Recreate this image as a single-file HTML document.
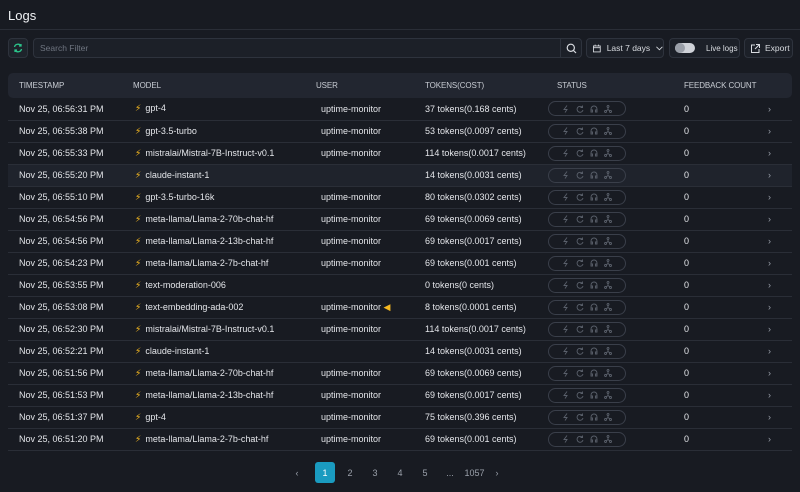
<!DOCTYPE html>
<html><head><style>
*{box-sizing:border-box;margin:0;padding:0}
body{width:800px;height:492px;background:#181b22;font-family:"Liberation Sans",sans-serif;color:#e4e6ea;position:relative;overflow:hidden;font-size:9px}
.title{position:absolute;left:8px;top:8px;font-size:13px;color:#f0f2f5}
.hr{position:absolute;left:0;right:0;top:29px;height:1px;background:#2a2e37}
.box{position:absolute;top:38px;height:20px;border:1px solid #2e333d;border-radius:4px;background:#1c2028;display:flex;align-items:center;font-size:8.5px;color:#d8dbe0;white-space:nowrap}
table{position:absolute;left:8px;top:73px;width:784px;border-collapse:collapse;table-layout:fixed}
th{height:25px;background:#222630;text-align:left;font-weight:normal;font-size:8px;color:#c8ccd3;letter-spacing:-.1px;white-space:nowrap}
th:first-child{border-radius:5px 0 0 5px}th:last-child{border-radius:0 5px 5px 0}
td{height:22px;border-bottom:1px solid #2a2e37;font-size:9px;color:#e4e6ea;white-space:nowrap}
tr.hl td{background:#1f232c}
.bolt{color:#f5b820;font-size:9px;margin-right:4px}
.pill{width:78px;height:15px;border:1px solid #3a3f4a;border-radius:8px;display:flex;justify-content:space-around;align-items:center;padding:0 10px}
.pill svg{width:8px;height:8px}
.chev{color:#9aa0aa;font-size:9px}
.pg{position:absolute;top:462px;height:21px;font-size:9px;color:#9aa0aa;display:flex;align-items:center;justify-content:center}
</style></head><body>
<div class="title">Logs</div>
<div class="hr"></div>
<div class="box" style="left:8px;width:20px;justify-content:center;background:#1e232b"><svg width="10" height="10" viewBox="0 0 10 10" fill="none" stroke="#2bc48a" stroke-width="1.3"><path d="M1.5 4A3.5 3.5 0 0 1 8 3M8.5 6A3.5 3.5 0 0 1 2 7"/><path d="M8 1v2H6M2 9V7h2"/></svg></div>
<div class="box" style="left:33px;width:549px;padding-left:6px;color:#6f7580">Search Filter<span style="position:absolute;right:0;top:0;width:21px;height:18px;border-left:1px solid #2e333d;display:flex;align-items:center;justify-content:center"><svg width="11" height="11" viewBox="0 0 11 11" fill="none" stroke="#d8dbe0" stroke-width="1.2"><circle cx="4.8" cy="4.8" r="3.6"/><path d="M7.5 7.5l2.5 2.5"/></svg></span></div>
<div class="box" style="left:586px;width:78px;padding-left:6px"><svg width="9" height="9" viewBox="0 0 9 9" fill="none" stroke="#d8dbe0" stroke-width="1"><rect x=".5" y="1.5" width="8" height="7"/><path d="M.5 3.5h8M2.5 0v2M6.5 0v2"/></svg><span style="margin-left:6px">Last 7 days</span><svg style="margin-left:6px" width="8" height="5" viewBox="0 0 8 5" fill="none" stroke="#d8dbe0" stroke-width="1"><path d="M.5.5L4 4 7.5.5"/></svg></div>
<div class="box" style="left:669px;width:71px;padding-left:5px;font-size:8px"><span style="width:20px;height:10px;border-radius:5px;background:#cfd2d8;position:relative;flex:none"><span style="position:absolute;left:0;top:0;width:10px;height:10px;border-radius:5px;background:#9a9fa8"></span></span><span style="margin-left:11px">Live logs</span></div>
<div class="box" style="left:744px;width:49px;padding-left:6px"><svg width="9" height="9" viewBox="0 0 9 9" fill="none" stroke="#d8dbe0" stroke-width="1"><path d="M4 1H.5v7.5H8V5M5 .5h3.5V4M8.5.5L4 5"/></svg><span style="margin-left:5px">Export</span></div>
<table>
<colgroup><col style="width:114px"><col style="width:183px"><col style="width:109px"><col style="width:131px"><col style="width:129px"><col style="width:88px"><col style="width:30px"></colgroup>
<tr><th style="padding-left:11px">TIMESTAMP</th><th style="padding-left:11px">MODEL</th><th style="padding-left:11px">USER</th><th style="padding-left:11px">TOKENS(COST)</th><th style="padding-left:12px">STATUS</th><th colspan="2" style="padding-left:10px">FEEDBACK COUNT</th></tr>
<tbody id="tb"></tbody>
</table>
<div class="pg" style="left:290px;width:14px">&#8249;</div>
<div class="pg" style="left:315px;width:20px;background:#1a9bc0;color:#fff;border-radius:3px">1</div>
<div class="pg" style="left:340px;width:20px">2</div>
<div class="pg" style="left:365px;width:20px">3</div>
<div class="pg" style="left:390px;width:20px">4</div>
<div class="pg" style="left:415px;width:20px">5</div>
<div class="pg" style="left:440px;width:20px">...</div>
<div class="pg" style="left:462px;width:25px">1057</div>
<div class="pg" style="left:490px;width:14px">&#8250;</div>
<script>
var d=[["Nov 25, 06:56:31 PM","gpt-4","uptime-monitor","37 tokens(0.168 cents)"],
["Nov 25, 06:55:38 PM","gpt-3.5-turbo","uptime-monitor","53 tokens(0.0097 cents)"],
["Nov 25, 06:55:33 PM","mistralai/Mistral-7B-Instruct-v0.1","uptime-monitor","114 tokens(0.0017 cents)"],
["Nov 25, 06:55:20 PM","claude-instant-1","","14 tokens(0.0031 cents)"],
["Nov 25, 06:55:10 PM","gpt-3.5-turbo-16k","uptime-monitor","80 tokens(0.0302 cents)"],
["Nov 25, 06:54:56 PM","meta-llama/Llama-2-70b-chat-hf","uptime-monitor","69 tokens(0.0069 cents)"],
["Nov 25, 06:54:56 PM","meta-llama/Llama-2-13b-chat-hf","uptime-monitor","69 tokens(0.0017 cents)"],
["Nov 25, 06:54:23 PM","meta-llama/Llama-2-7b-chat-hf","uptime-monitor","69 tokens(0.001 cents)"],
["Nov 25, 06:53:55 PM","text-moderation-006","","0 tokens(0 cents)"],
["Nov 25, 06:53:08 PM","text-embedding-ada-002","uptime-monitor <span style='color:#f5b820'>&#9664;</span>","8 tokens(0.0001 cents)"],
["Nov 25, 06:52:30 PM","mistralai/Mistral-7B-Instruct-v0.1","uptime-monitor","114 tokens(0.0017 cents)"],
["Nov 25, 06:52:21 PM","claude-instant-1","","14 tokens(0.0031 cents)"],
["Nov 25, 06:51:56 PM","meta-llama/Llama-2-70b-chat-hf","uptime-monitor","69 tokens(0.0069 cents)"],
["Nov 25, 06:51:53 PM","meta-llama/Llama-2-13b-chat-hf","uptime-monitor","69 tokens(0.0017 cents)"],
["Nov 25, 06:51:37 PM","gpt-4","uptime-monitor","75 tokens(0.396 cents)"],
["Nov 25, 06:51:20 PM","meta-llama/Llama-2-7b-chat-hf","uptime-monitor","69 tokens(0.001 cents)"]];
var s='stroke="#5a606b" fill="none" stroke-width="0.9"';
var pill='<div class="pill"><svg viewBox="0 0 8 8" '+s+'><path d="M5 .5L2 4.5h3L3 7.5"/></svg><svg viewBox="0 0 8 8" '+s+'><path d="M6.5 2.5A3 3 0 1 0 7 5M6.5.5v2h-2"/></svg><svg viewBox="0 0 8 8" '+s+'><path d="M1 6V4a3 3 0 0 1 6 0v2M1 5h1.5v2H1zM5.5 5H7v2H5.5z"/></svg><svg viewBox="0 0 8 8" '+s+'><circle cx="4" cy="1.5" r="1"/><circle cx="1.5" cy="6.5" r="1"/><circle cx="6.5" cy="6.5" r="1"/><path d="M4 2.5v2L2 6M4 4.5L6 6"/></svg></div>';
var h='';d.forEach(function(r,i){h+='<tr'+(i==3?' class="hl"':'')+'><td style="padding-left:11px">'+r[0]+'</td><td style="padding-left:13px"><span class="bolt">&#9889;&#xFE0E;</span>'+r[1]+'</td><td style="padding-left:16px">'+r[2]+'</td><td style="padding-left:11px">'+r[3]+'</td><td style="padding-left:3px">'+pill+'</td><td style="padding-left:10px">0</td><td class="chev" style="padding-left:6px">&#8250;</td></tr>'});
document.getElementById('tb').innerHTML=h;
</script>
</body></html>
